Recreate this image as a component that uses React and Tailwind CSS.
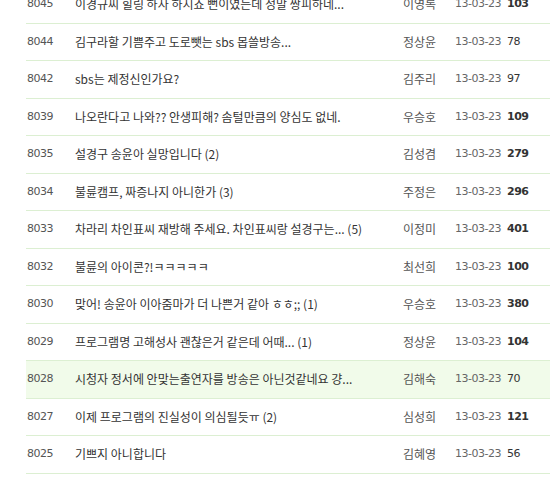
const rows = [
  { no: '8045', title: '이경규씨 힐링 하자 하시죠 뻔이였는데 정말 짱피하네...', name: '이영록', date: '13-03-23', hit: 103 },
  { no: '8044', title: '김구라할 기쁨주고 도로뺏는 sbs 몹쓸방송...', name: '정상윤', date: '13-03-23', hit: 78 },
  { no: '8042', title: 'sbs는 제정신인가요?', name: '김주리', date: '13-03-23', hit: 97 },
  { no: '8039', title: '나오란다고 나와?? 안생피해? 솜털만큼의 양심도 없네.', name: '우승호', date: '13-03-23', hit: 109 },
  { no: '8035', title: '설경구 송윤아 실망입니다 (2)', name: '김성겸', date: '13-03-23', hit: 279 },
  { no: '8034', title: '불륜캠프, 짜증나지 아니한가 (3)', name: '주정은', date: '13-03-23', hit: 296 },
  { no: '8033', title: '차라리 차인표씨 재방해 주세요. 차인표씨랑 설경구는... (5)', name: '이정미', date: '13-03-23', hit: 401 },
  { no: '8032', title: '불륜의 아이콘?!ㅋㅋㅋㅋㅋ', name: '최선희', date: '13-03-23', hit: 100 },
  { no: '8030', title: '맞어! 송윤아 이아줌마가 더 나쁜거 같아 ㅎㅎ;; (1)', name: '우승호', date: '13-03-23', hit: 380 },
  { no: '8029', title: '프로그램명 고해성사 괜찮은거 같은데 어때... (1)', name: '정상윤', date: '13-03-23', hit: 104 },
  { no: '8028', title: '시청자 정서에 안맞는출연자를 방송은 아닌것같네요 걍...', name: '김해숙', date: '13-03-23', hit: 70, on: true },
  { no: '8027', title: '이제 프로그램의 진실성이 의심될듯ㅠ (2)', name: '심성희', date: '13-03-23', hit: 121 },
  { no: '8025', title: '기쁘지 아니합니다', name: '김혜영', date: '13-03-23', hit: 56 },
];

const App = () => {
  return (
    <div className="w-[550px] h-[482px] overflow-hidden bg-white font-['Noto_Sans_CJK_KR',sans-serif]">
      <div className="ml-[26px] mt-[-14px]">
        {rows.map((r) => (
          <div
            key={r.no}
            className={`flex items-center h-[37.5px] border-b border-[#dcefd2] ${r.on ? 'bg-[#f1fbea]' : ''}`}
          >
            <div className="w-[49px] pl-px text-[11px] text-[#555] font-['DejaVu_Sans',sans-serif] tracking-[-0.5px]">{r.no}</div>
            <div className="w-[328px] text-[12px] text-[#333] whitespace-nowrap overflow-hidden">{r.title}</div>
            <div className="w-[52px] text-[12px] text-[#555]">{r.name}</div>
            <div className="w-[52px] text-[11px] text-[#666] font-['DejaVu_Sans',sans-serif] tracking-[-0.5px]">{r.date}</div>
            <div className={`text-[11px] text-[#333] font-['DejaVu_Sans',sans-serif] tracking-[-0.5px] ${r.hit >= 100 ? 'font-bold' : ''}`}>{r.hit}</div>
          </div>
        ))}
      </div>
    </div>
  );
};

export default App;
